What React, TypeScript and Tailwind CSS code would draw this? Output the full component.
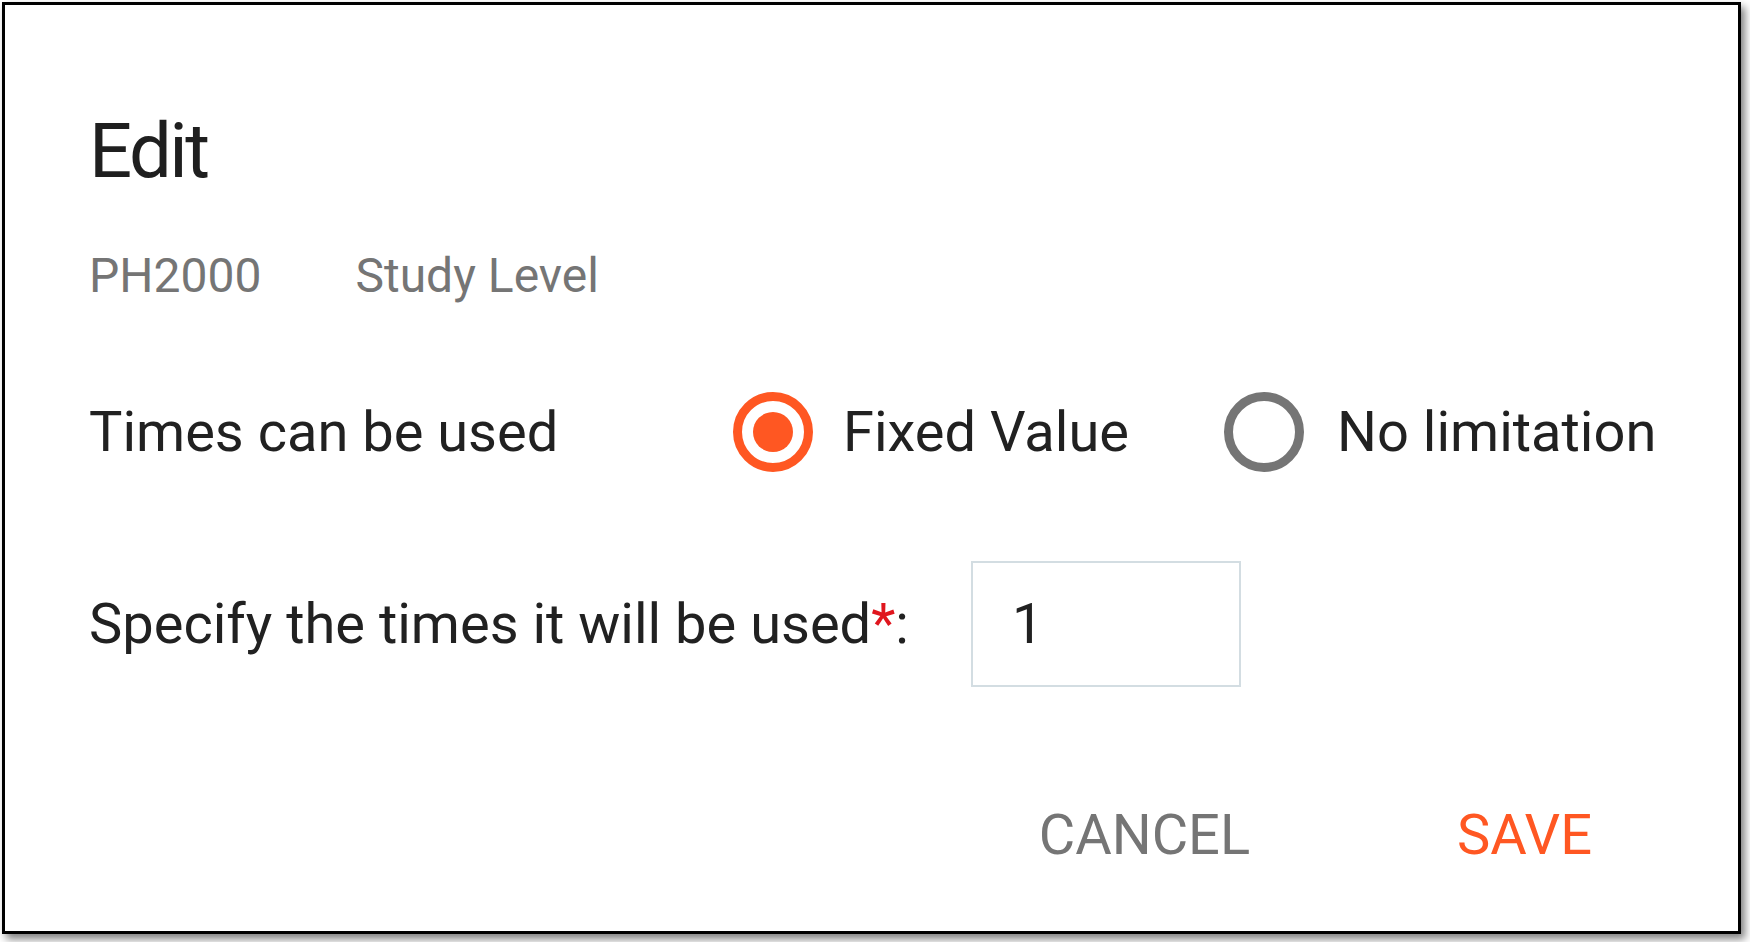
import React, { useState } from 'react';

type Limit = 'fixed' | 'none';

const Radio: React.FC<{ checked: boolean; label: string; onClick: () => void; wide?: boolean }> = ({
  checked,
  label,
  onClick,
  wide,
}) => (
  <button type="button" onClick={onClick} className={`flex items-center ${wide ? 'gap-[33px]' : 'gap-[30px]'}`}>
    <span
      className={`flex h-[80px] w-[80px] shrink-0 items-center justify-center rounded-full border-[9px] ${
        checked ? 'border-[#ff5722]' : 'border-[#757575]'
      }`}
    >
      {checked && <span className="h-[40px] w-[40px] rounded-full bg-[#ff5722]" />}
    </span>
    <span className="text-[56px] leading-[56px] text-[#212121]">{label}</span>
  </button>
);

export default function App() {
  const [limit, setLimit] = useState<Limit>('fixed');
  const [times, setTimes] = useState('1');

  return (
    <div className="min-h-screen bg-white" style={{ fontFamily: 'Roboto, "Noto Sans", sans-serif' }}>
      <div className="ml-[2px] mt-[2px] h-[932px] w-[1739px] border-[3px] border-black bg-white shadow-[4px_5px_8px_rgba(0,0,0,0.5)]">
        <div className="flex flex-col pl-[84px] pt-[108px]">
          {/* Title */}
          <h2 className="text-[76px] font-normal leading-[76px] tracking-[-2.5px] text-[#1f1f1f]">Edit</h2>

          {/* Subtitle */}
          <div className="mt-[63px] flex gap-[94px] text-[48px] leading-[48px] text-[#757575]">
            <span>PH2000</span>
            <span>Study Level</span>
          </div>

          {/* Times can be used */}
          <div className="mt-[92px] flex h-[80px] items-center">
            <span className="w-[644px] text-[56px] leading-[56px] text-[#212121]">Times can be used</span>
            <div className="flex items-center gap-[95px]">
              <Radio checked={limit === 'fixed'} label="Fixed Value" onClick={() => setLimit('fixed')} />
              <Radio checked={limit === 'none'} label="No limitation" onClick={() => setLimit('none')} wide />
            </div>
          </div>

          {/* Specify times */}
          <div className="mt-[89px] flex h-[126px] items-center">
            <span className="w-[882px] text-[56px] leading-[56px] text-[#212121]">
              Specify the times it will be used<span className="text-[#e0161e]">*</span>:
            </span>
            <input
              value={times}
              onChange={(e) => setTimes(e.target.value)}
              className="h-[126px] w-[270px] border-2 border-[#d3dde2] pl-[39px] text-[56px] text-[#212121] outline-none"
            />
          </div>

          {/* Actions */}
          <div className="mt-[120px] flex justify-end gap-[207px] pr-[146px] text-[56px] leading-[56px]">
            <button type="button" className="text-[#757575]">CANCEL</button>
            <button type="button" className="text-[#ff5722]">SAVE</button>
          </div>
        </div>
      </div>
    </div>
  );
}
